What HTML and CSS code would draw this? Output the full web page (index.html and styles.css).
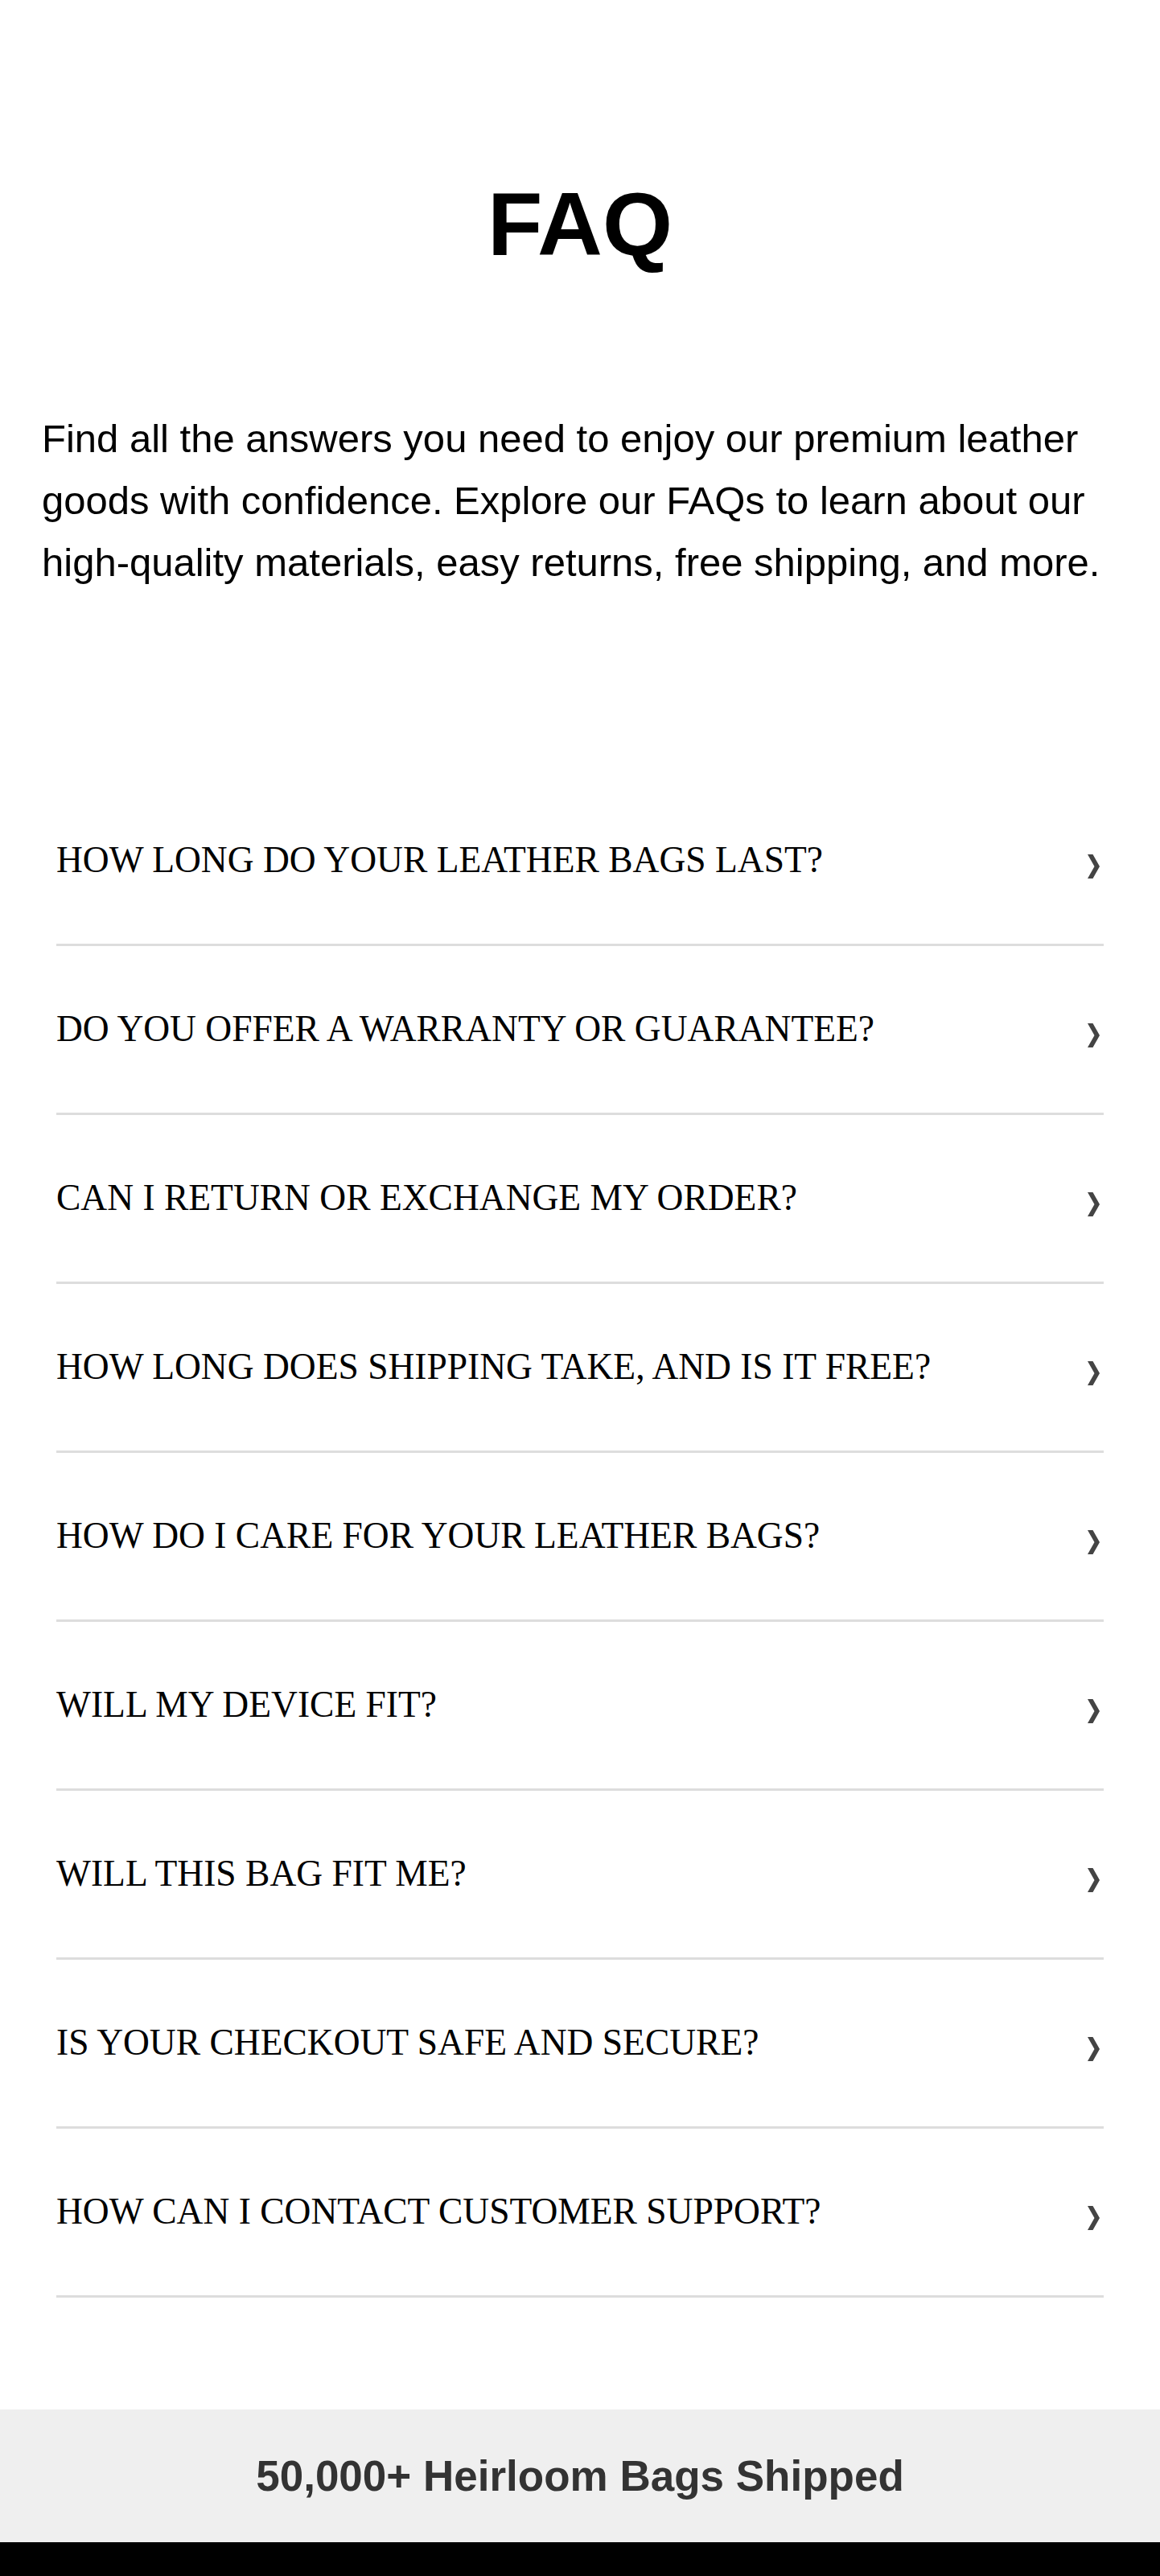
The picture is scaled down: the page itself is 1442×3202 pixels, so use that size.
FILE: index.html
```html
<!DOCTYPE html>
<html lang="en">
<head>
<meta charset="utf-8">
<title>FAQ</title>
<link rel="stylesheet" href="styles.css">
</head>
<body class="page">
  <section class="hero">
    <h1 class="hero-title">FAQ</h1>
    <p class="hero-intro">Find all the answers you need to enjoy our premium leather goods with confidence. Explore our FAQs to learn about our high-quality materials, easy returns, free shipping, and more.</p>
  </section>

  <ul class="faq-list">
    <li class="faq-item"><span class="faq-q">HOW LONG DO YOUR LEATHER BAGS LAST?</span><svg class="chevron" viewBox="0 0 15 30" width="15" height="30"><polygon points="0,0 6.5,0 15,15 6.5,30 0,30 8.5,15"/></svg></li>
    <li class="faq-item"><span class="faq-q">DO YOU OFFER A WARRANTY OR GUARANTEE?</span><svg class="chevron" viewBox="0 0 15 30" width="15" height="30"><polygon points="0,0 6.5,0 15,15 6.5,30 0,30 8.5,15"/></svg></li>
    <li class="faq-item"><span class="faq-q">CAN I RETURN OR EXCHANGE MY ORDER?</span><svg class="chevron" viewBox="0 0 15 30" width="15" height="30"><polygon points="0,0 6.5,0 15,15 6.5,30 0,30 8.5,15"/></svg></li>
    <li class="faq-item"><span class="faq-q">HOW LONG DOES SHIPPING TAKE, AND IS IT FREE?</span><svg class="chevron" viewBox="0 0 15 30" width="15" height="30"><polygon points="0,0 6.5,0 15,15 6.5,30 0,30 8.5,15"/></svg></li>
    <li class="faq-item"><span class="faq-q">HOW DO I CARE FOR YOUR LEATHER BAGS?</span><svg class="chevron" viewBox="0 0 15 30" width="15" height="30"><polygon points="0,0 6.5,0 15,15 6.5,30 0,30 8.5,15"/></svg></li>
    <li class="faq-item"><span class="faq-q">WILL MY DEVICE FIT?</span><svg class="chevron" viewBox="0 0 15 30" width="15" height="30"><polygon points="0,0 6.5,0 15,15 6.5,30 0,30 8.5,15"/></svg></li>
    <li class="faq-item"><span class="faq-q">WILL THIS BAG FIT ME?</span><svg class="chevron" viewBox="0 0 15 30" width="15" height="30"><polygon points="0,0 6.5,0 15,15 6.5,30 0,30 8.5,15"/></svg></li>
    <li class="faq-item"><span class="faq-q">IS YOUR CHECKOUT SAFE AND SECURE?</span><svg class="chevron" viewBox="0 0 15 30" width="15" height="30"><polygon points="0,0 6.5,0 15,15 6.5,30 0,30 8.5,15"/></svg></li>
    <li class="faq-item"><span class="faq-q">HOW CAN I CONTACT CUSTOMER SUPPORT?</span><svg class="chevron" viewBox="0 0 15 30" width="15" height="30"><polygon points="0,0 6.5,0 15,15 6.5,30 0,30 8.5,15"/></svg></li>
  </ul>

  <section class="stats">
    <p class="stats-text">50,000+ Heirloom Bags Shipped</p>
  </section>
  <footer class="site-footer"></footer>
</body>
</html>
```

FILE: styles.css
```css
* {
  box-sizing: border-box;
}

.page {
  margin: 0;
  background: #ffffff;
  color: #000000;
  font-family: "Liberation Sans", Arial, sans-serif;
}

.hero {
  padding-top: 215px;
}

.hero-title {
  margin: 0;
  font-size: 112px;
  line-height: 128px;
  font-weight: 700;
  text-align: center;
}

.hero-intro {
  margin: 164px 0 0;
  padding: 0 52px;
  font-size: 49px;
  line-height: 77px;
}

.faq-list {
  list-style: none;
  margin: 228px 0 0;
  padding: 0 70px;
}

.faq-item {
  display: flex;
  align-items: center;
  justify-content: space-between;
  padding: 77px 5px 78px 0;
  border-bottom: 3px solid #dddddd;
}

.faq-q {
  font-family: "Liberation Serif", "Times New Roman", serif;
  font-size: 45.5px;
  line-height: 52px;
  color: #000000;
}

.chevron {
  display: block;
  flex: none;
  margin-top: 15px;
  fill: #444444;
}

.stats {
  margin-top: 139px;
  background: #efefef;
  padding: 52px 0;
}

.stats-text {
  margin: 0;
  text-align: center;
  font-size: 53px;
  line-height: 61px;
  font-weight: 700;
  color: #333333;
}

.site-footer {
  height: 42px;
  background: #000000;
}
```
